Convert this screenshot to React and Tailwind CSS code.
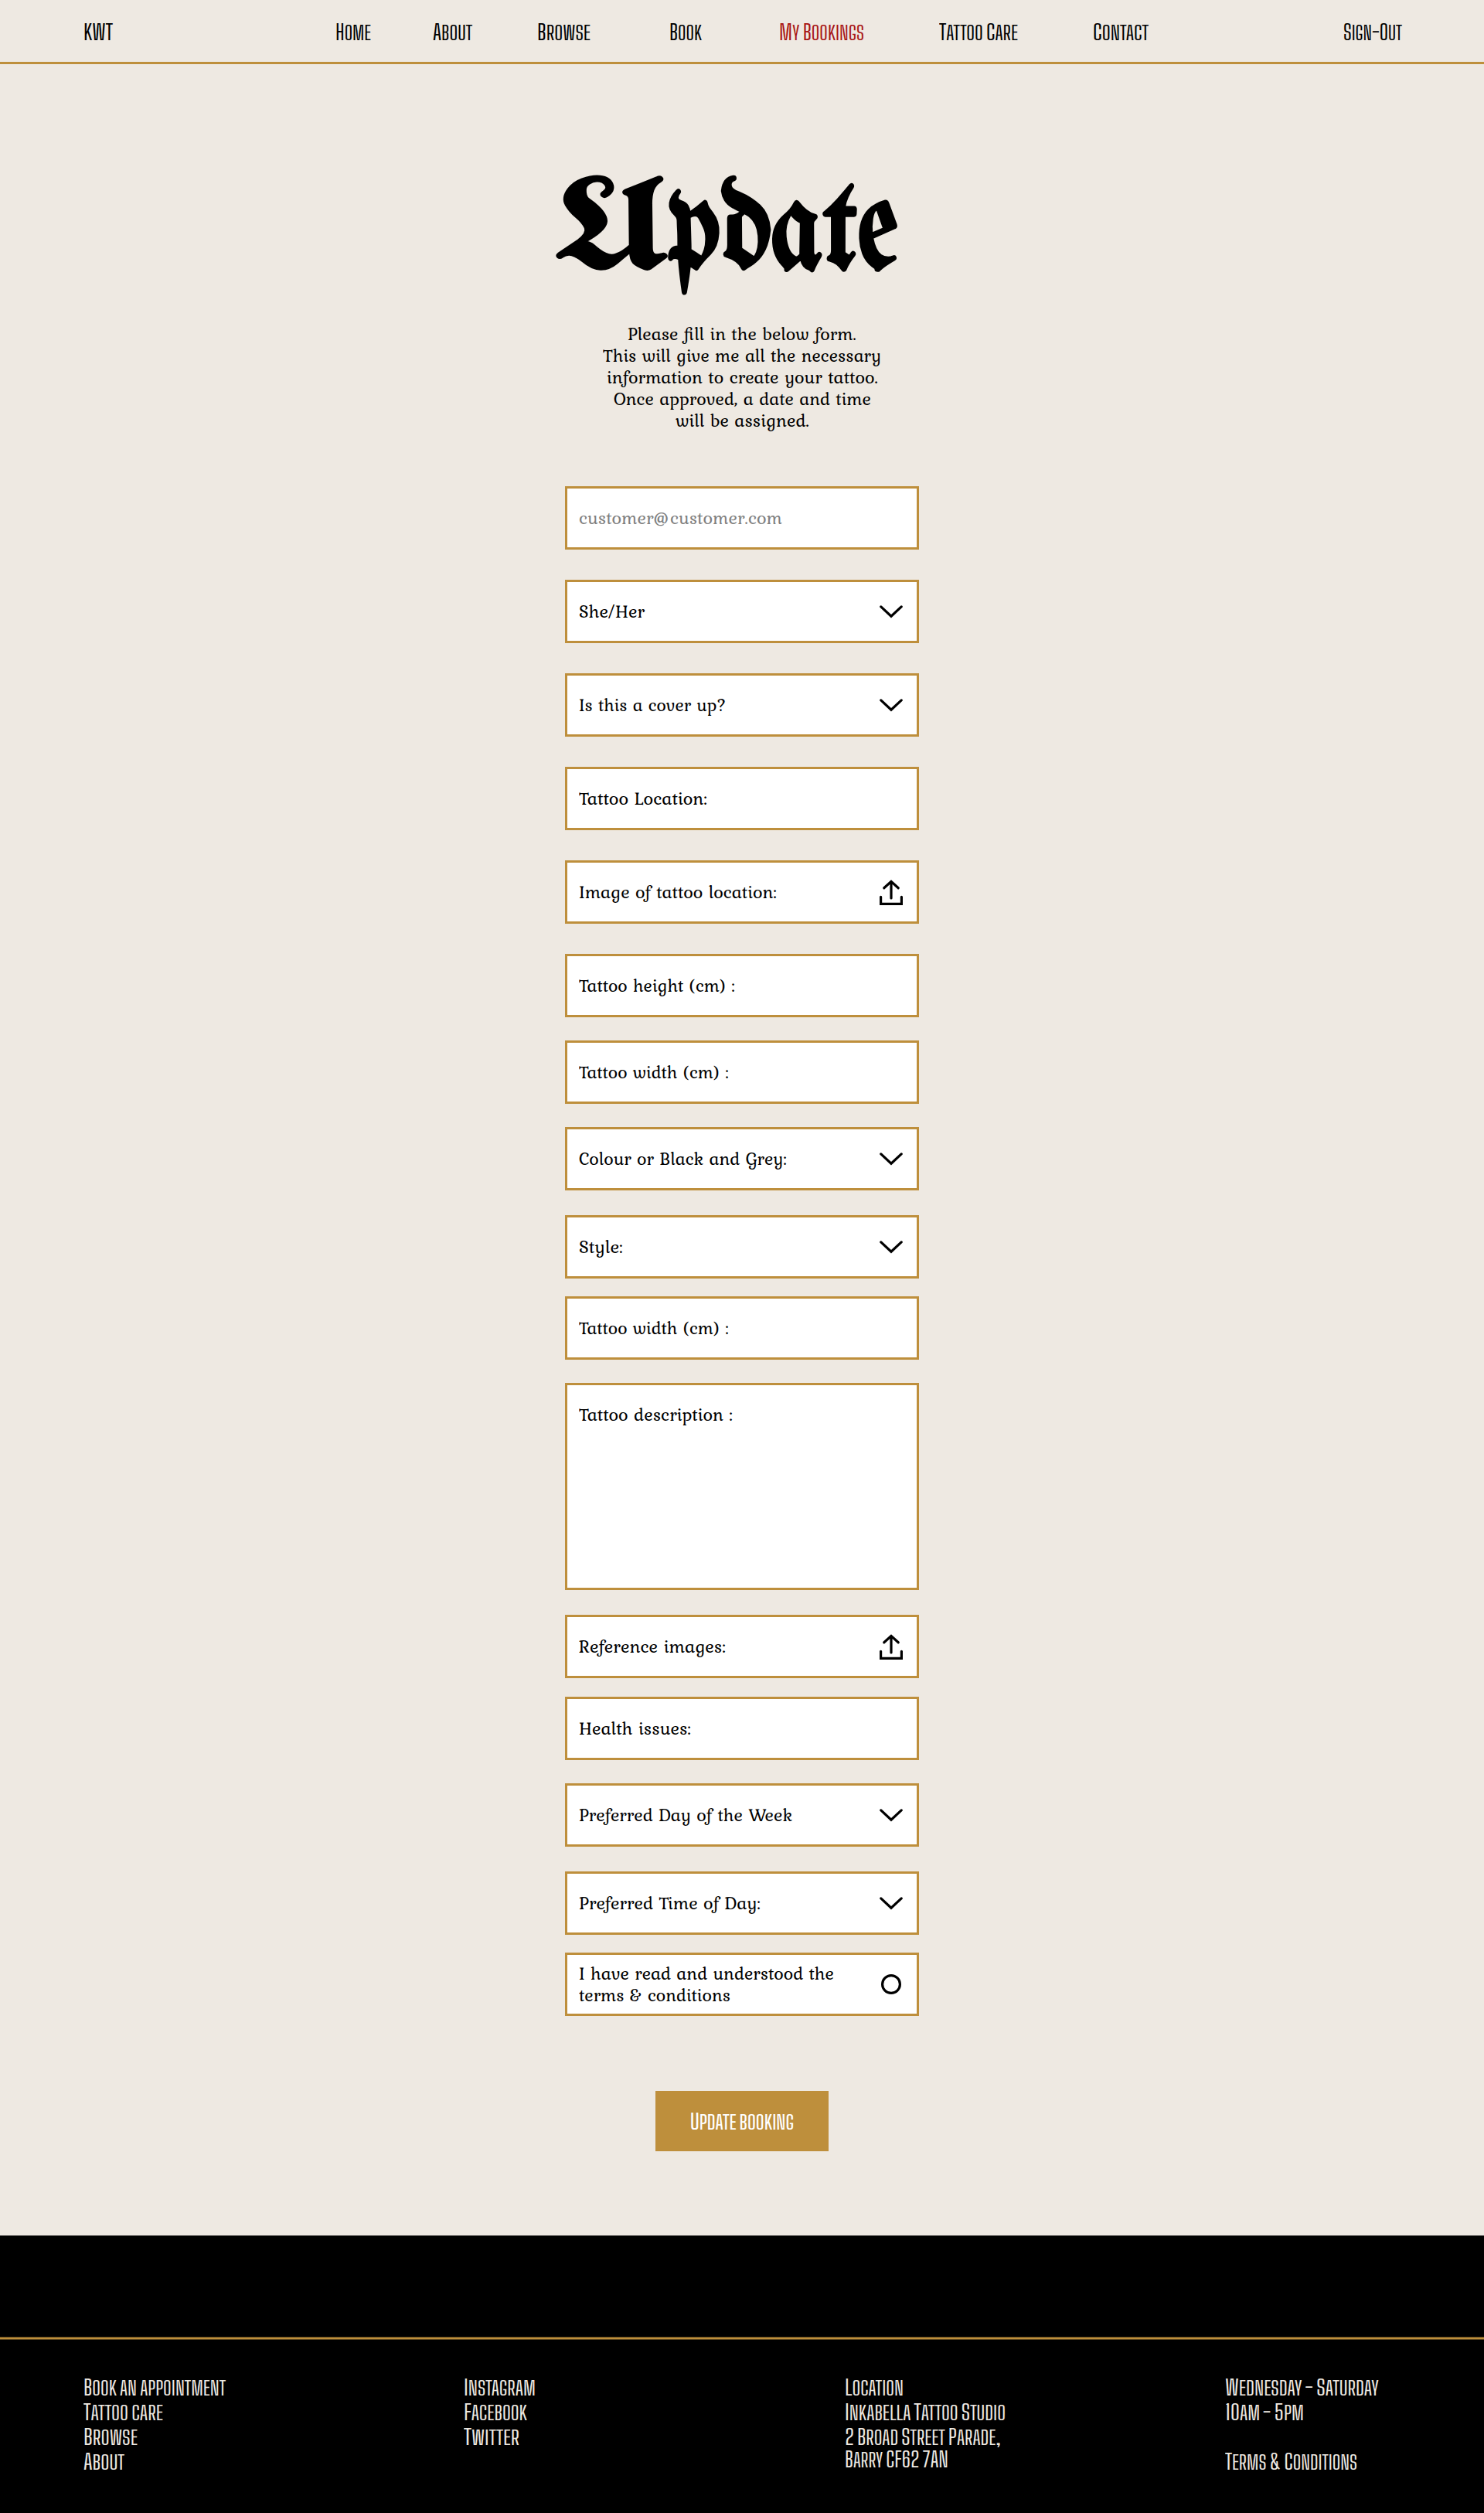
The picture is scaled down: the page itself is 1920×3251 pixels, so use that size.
import { useLayoutEffect, useRef, useState } from 'react';

/* Stretches or condenses one line of text to the width of its box. */
function Fit({ children, className = '' }) {
  const box = useRef(null);
  const ink = useRef(null);
  const [scale, setScale] = useState(1);
  useLayoutEffect(() => {
    setScale(box.current.offsetWidth / ink.current.getBoundingClientRect().width);
  }, []);
  return (
    <span ref={box} className={`inline-block whitespace-nowrap text-left ${className}`}>
      <span ref={ink} className="inline-block origin-left" style={{ transform: `scaleX(${scale})` }}>
        {children}
      </span>
    </span>
  );
}

/* Display lettering: capitals at full size, lower case as slightly smaller capitals. */
function Caps({ children, className }) {
  return (
    <Fit className={`font-['Big_Shoulders_Display','Antonio','Roboto',sans-serif] text-[27px] [word-spacing:-0.08em] ${className}`}>
      {children.split(/([a-z]+)/).map((part, i) =>
        i % 2 ? (
          <span key={i} className="text-[24.5px] uppercase">{part}</span>
        ) : (
          part
        )
      )}
    </Fit>
  );
}

function Chevron() {
  return (
    <svg className="mt-[30px] h-[17px] w-[30px] shrink-0" viewBox="0 0 30 17" fill="none" stroke="#000" strokeWidth="3.2" strokeLinecap="round">
      <path d="M1.8 1.9 15 14.2 28.2 1.9" />
    </svg>
  );
}

function Upload() {
  return (
    <svg className="mt-[22px] h-[33px] w-[30px] shrink-0" viewBox="0 0 30 33" fill="none" stroke="#000" strokeWidth="3.2" strokeLinecap="round">
      <path d="M15 24V2.4M5.8 10.8 15 2.4l9.2 8.4" />
      <path d="M1.6 22.3v9.1h26.8v-9.1" />
    </svg>
  );
}

function Circle() {
  return (
    <svg className="mt-[25px] mr-[2px] h-[26px] w-[26px] shrink-0" viewBox="0 0 26 26" fill="none" stroke="#000" strokeWidth="3.2">
      <circle cx="13" cy="13" r="11.4" />
    </svg>
  );
}

const icons = { chevron: <Chevron />, upload: <Upload />, circle: <Circle /> };

const fields = [
  { lines: [['customer@customer.com', 'w-[263px]']], box: 'h-[82px] text-[#808080]' },
  { lines: [['She/Her', 'w-[85px]']], box: 'mt-[39px] h-[82px]', icon: 'chevron' },
  { lines: [['Is this a cover up?', 'w-[191px]']], box: 'mt-[39px] h-[82px]', icon: 'chevron' },
  { lines: [['Tattoo Location:', 'w-[166px]']], box: 'mt-[39px] h-[82px]' },
  { lines: [['Image of tattoo location:', 'w-[256px]']], box: 'mt-[39px] h-[82px]', icon: 'upload' },
  { lines: [['Tattoo height (cm) :', 'w-[202px]']], box: 'mt-[39px] h-[82px]' },
  { lines: [['Tattoo width (cm) :', 'w-[194px]']], box: 'mt-[30px] h-[82px]' },
  { lines: [['Colour or Black and Grey:', 'w-[269px]']], box: 'mt-[30px] h-[82px]', icon: 'chevron' },
  { lines: [['Style:', 'w-[57px]']], box: 'mt-[32px] h-[82px]', icon: 'chevron' },
  { lines: [['Tattoo width (cm) :', 'w-[194px]']], box: 'mt-[23px] h-[82px]' },
  { lines: [['Tattoo description :', 'w-[199px]']], box: 'mt-[30px] h-[268px]' },
  { lines: [['Reference images:', 'w-[190px]']], box: 'mt-[32px] h-[82px]', icon: 'upload' },
  { lines: [['Health issues:', 'w-[145px]']], box: 'mt-[24px] h-[82px]' },
  { lines: [['Preferred Day of the Week', 'w-[276px]']], box: 'mt-[30px] h-[82px]', icon: 'chevron' },
  { lines: [['Preferred Time of Day:', 'w-[235px]']], box: 'mt-[32px] h-[82px]', icon: 'chevron' },
  {
    lines: [
      ['I have read and understood the', 'w-[330px]'],
      ['terms & conditions', 'w-[196px]'],
    ],
    box: 'mt-[23px] h-[82px]',
    icon: 'circle',
  },
];

function Field({ lines, box, icon }) {
  return (
    <div className={`flex w-[458px] items-start justify-between border-[3px] border-[#be8f3c] bg-white pr-[18px] pl-[15px] ${box}`}>
      <div className={lines.length > 1 ? 'pt-[11px]' : 'pt-[25px]'}>
        {lines.map(([text, width]) => (
          <p key={text} className="h-7 leading-[0] before:inline-block before:h-[21px] before:content-['']">
            <Fit className={width}>{text}</Fit>
          </p>
        ))}
      </div>
      {icon && icons[icon]}
    </div>
  );
}

const nav = [
  ['KWT', 'ml-[108px] w-[38px]'],
  ['Home', 'ml-[288px] w-[46px]'],
  ['About', 'ml-[80px] w-[51px]'],
  ['Browse', 'ml-[84px] w-[69px]'],
  ['Book', 'ml-[102px] w-[42px]'],
  ['My Bookings', 'ml-[100px] w-[110px] text-[#a81616]'],
  ['Tattoo Care', 'ml-[97px] w-[102px]'],
  ['Contact', 'ml-[97px] w-[72px]'],
  ['Sign-Out', 'ml-[252px] w-[76px]'],
];

const intro = [
  ['Please fill in the below form.', 'w-[296px]'],
  ['This will give me all the necessary', 'w-[360px]'],
  ['information to create your tattoo.', 'w-[351px]'],
  ['Once approved, a date and time', 'w-[333px]'],
  ['will be assigned.', 'w-[173px]'],
];

const footer = [
  [['Book an appointment', 'w-[184px]'], ['Tattoo care', 'w-[103px]'], ['Browse', 'w-[70px]'], ['About', 'w-[53px]']],
  [['Instagram', 'w-[93px]'], ['Facebook', 'w-[82px]'], ['Twitter', 'w-[72px]']],
  [['Location', 'w-[76px]'], ['Inkabella Tattoo Studio', 'w-[208px]'], ['2 Broad Street Parade,', 'w-[202px]'], ['Barry CF62 7AN', 'w-[134px] -translate-y-[3px]']],
  [['Wednesday - Saturday', 'w-[199px]'], ['10am - 5pm', 'w-[102px]'], null, ['Terms & Conditions', 'w-[171px]']],
];

export default function App() {
  return (
    <div className="flex h-[3251px] w-[1920px] flex-col overflow-hidden bg-[#eee9e2] font-['Kurale','DejaVu_Serif',serif] text-2xl text-black">
      <header className="flex h-[83px] shrink-0 border-b-[3px] border-[#be8f3c]">
        {nav.map(([text, place]) => (
          <a key={text} className="leading-[0] before:inline-block before:h-[52px] before:content-['']">
            <Caps className={place}>{text}</Caps>
          </a>
        ))}
      </header>

      <main className="flex shrink-0 flex-col items-center">
        <h1 className="mr-[40px] h-[269px] font-['UnifrakturMaguntia','UnifrakturCook',serif] text-[168px] leading-[0] font-bold before:inline-block before:h-[263px] before:content-['']">
          <Fit className="w-[148px]">U</Fit>
          <Fit className="w-[296px]">pdate</Fit>
        </h1>

        <div className="mt-[66px] flex flex-col items-center">
          {intro.map(([text, width]) => (
            <p key={text} className="h-7 leading-[0] before:inline-block before:h-[22px] before:content-['']">
              <Fit className={width}>{text}</Fit>
            </p>
          ))}
        </div>

        <form className="mt-[71px] flex flex-col">
          {fields.map((field, i) => (
            <Field key={i} {...field} />
          ))}
        </form>

        <button type="button" className="mt-[97px] flex h-[78px] w-[224px] justify-center bg-[#be8f3c] text-white">
          <span className="leading-[0] before:inline-block before:h-[50px] before:content-['']">
            <Caps className="w-[134px] font-medium">Update booking</Caps>
          </span>
        </button>
      </main>

      <footer className="mt-[109px] flex-1 bg-black pt-[131px] text-[#eee9e2]">
        <div className="h-1 border-y border-[#5f481e] bg-[#be8f3c]" />
        <div className="grid grid-cols-[492px_493px_492px_1fr] pt-[47px] pl-[108px]">
          {footer.map((column, c) => (
            <div key={c}>
              {column.map((row, r) => (
                <p key={r} className="h-8 leading-[0] before:inline-block before:h-[25px] before:content-['']">
                  {row && <Caps className={row[1]}>{row[0]}</Caps>}
                </p>
              ))}
            </div>
          ))}
        </div>
      </footer>
    </div>
  );
}
